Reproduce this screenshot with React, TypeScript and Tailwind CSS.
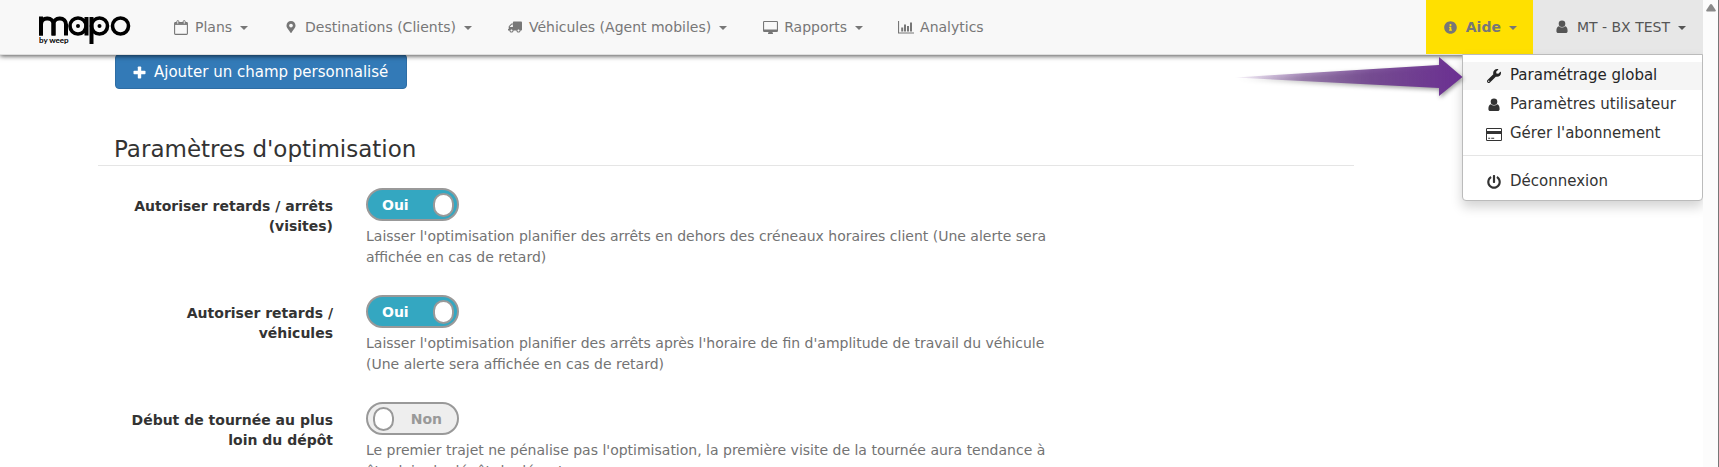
import React, { useState } from 'react';
import { FaInfoCircle, FaMapMarkerAlt, FaPowerOff, FaTruck, FaWrench } from 'react-icons/fa';

const settings = [
  {
    id: 'late-stops',
    label: 'Autoriser retards / arrêts (visites)',
    help: "Laisser l'optimisation planifier des arrêts en dehors des créneaux horaires client (Une alerte sera affichée en cas de retard)",
    value: true
  },
  {
    id: 'late-vehicles',
    label: 'Autoriser retards / véhicules',
    help: "Laisser l'optimisation planifier des arrêts après l'horaire de fin d'amplitude de travail du véhicule (Une alerte sera affichée en cas de retard)",
    value: true
  },
  {
    id: 'far-start',
    label: 'Début de tournée au plus loin du dépôt',
    help: "Le premier trajet ne pénalise pas l'optimisation, la première visite de la tournée aura tendance à être loin du dépôt de départ.",
    value: false
  }
];

function CalendarIcon() {
  return (
    <svg width="14" height="15" viewBox="0 0 14 15" fill="none" stroke="currentColor">
      <rect x="0.6" y="2.6" width="12.8" height="11.8" rx="0.8" strokeWidth="1.1" />
      <path d="M1 4h12" strokeWidth="1.8" />
      <rect x="2.8" y="0.6" width="2" height="3.6" rx="0.9" fill="#f8f8f8" />
      <rect x="9.2" y="0.6" width="2" height="3.6" rx="0.9" fill="#f8f8f8" />
    </svg>
  );
}

function DesktopIcon() {
  return (
    <svg width="15" height="13" viewBox="0 0 15 13" fill="currentColor">
      <path fillRule="evenodd" d="M1.2 0h12.6A1.2 1.2 0 0 1 15 1.2v8.6a1.2 1.2 0 0 1-1.2 1.2H9.4l.6 1.5v.5H5v-.5L5.6 11H1.2A1.2 1.2 0 0 1 0 9.8V1.2A1.2 1.2 0 0 1 1.2 0zM1.1 1.1v7.4h12.8V1.1z" />
    </svg>
  );
}

function ChartIcon() {
  return (
    <svg width="16" height="13" viewBox="0 0 16 13" fill="currentColor">
      <path d="M0 0h1.1v11.5H16v1.1H0zM3.2 6.500h2v4h-2zM6 3.5h2v7H6zM9 5h2v5.5H9zM12 1.5h2v9h-2z" />
    </svg>
  );
}

function UserIcon() {
  return (
    <svg width="12" height="14" viewBox="0 0 12 14" fill="currentColor">
      <circle cx="6" cy="3.7" r="3.3" />
      <path d="M2.9 6.3C1.2 6.5.4 8.4.4 10.9c0 1.3.8 2.2 1.9 2.2h7.4c1.1 0 1.9-.9 1.9-2.2 0-2.5-.8-4.4-2.5-4.6a4.3 4.3 0 0 1-6.200 0z" />
    </svg>
  );
}

function CardIcon() {
  return (
    <svg width="16" height="13" viewBox="0 0 16 13" fill="currentColor">
      <path fillRule="evenodd" d="M1.3 0h13.4A1.3 1.3 0 0 1 16 1.3v10.4a1.3 1.3 0 0 1-1.3 1.3H1.3A1.3 1.3 0 0 1 0 11.7V1.3A1.3 1.3 0 0 1 1.3 0zM1 1v2h14V1zM1 6v6h14V6z" />
      <path d="M2.2 9.8h2v1h-2zM5.2 9.8h3v1h-3z" />
    </svg>
  );
}

function PlusIcon() {
  return (
    <svg width="13" height="13" viewBox="0 0 13 13" fill="currentColor">
      <rect x="0.5" y="4.8" width="12" height="3.4" rx="0.8" />
      <rect x="4.8" y="0.5" width="3.4" height="12" rx="0.8" />
    </svg>
  );
}

function Caret() {
  return (
    <svg width="8" height="4" viewBox="0 0 8 4" fill="currentColor" className="ml-2 mt-0.5">
      <path d="M0 0h8L4 4z" />
    </svg>
  );
}

function Logo() {
  return (
    <svg width="92" height="30" viewBox="0 0 92 30" role="img" aria-label="mapo by weep">
      <svg width="30" height="19.5">
        <rect x="0" y="0.5" width="4" height="20" />
        <g fill="none" stroke="#000" strokeWidth="4">
          <rect x="2" y="2.5" width="12.5" height="30" rx="6" />
          <rect x="14.5" y="2.5" width="12.5" height="30" rx="6" />
        </g>
      </svg>
      <g fill="none" stroke="#000" strokeWidth="3.6">
        <circle cx="39" cy="10" r="8" />
        <circle cx="60.5" cy="10" r="8" />
        <circle cx="81.5" cy="10" r="8" />
      </g>
      <circle cx="39" cy="10" r="2" />
      <circle cx="60.5" cy="10" r="2" />
      <rect x="45.5" y="1" width="4" height="18.5" />
      <rect x="50.5" y="1" width="4" height="27" />
      <text x="0" y="27" fontFamily="Lato" fontWeight="700" fontSize="8">by weep</text>
    </svg>
  );
}

const navItems = [
  { label: 'Plans', icon: <CalendarIcon />, menu: true },
  { label: 'Destinations (Clients)', icon: <FaMapMarkerAlt size={12} />, menu: true },
  { label: 'Véhicules (Agent mobiles)', icon: <FaTruck size={14} className="-scale-x-100" />, menu: true },
  { label: 'Rapports', icon: <DesktopIcon />, menu: true },
  { label: 'Analytics', icon: <ChartIcon />, menu: false }
];

function Toggle({ id, checked, onChange }: { id: string; checked: boolean; onChange: () => void }) {
  return (
    <label
      htmlFor={id}
      className={`flex h-[33px] w-[93px] cursor-pointer items-center justify-between rounded-full border-2 border-[#999] text-sm font-bold ${
        checked ? 'bg-[#34a7c1] pl-3.5 pr-[3px] text-white' : 'flex-row-reverse bg-[#eee] pl-[5px] pr-[15px] text-[#999]'
      }`}
    >
      <input id={id} type="checkbox" role="switch" checked={checked} onChange={onChange} className="sr-only" />
      <span>{checked ? 'Oui' : 'Non'}</span>
      <span className="h-6 w-[21px] rounded-full border-2 border-[#999] bg-white" />
    </label>
  );
}

function MenuItem({ icon, label, active }: { icon: React.ReactNode; label: string; active?: boolean }) {
  return (
    <li>
      <a href="#" className={`flex h-7 items-center gap-1.5 px-[21px] ${active ? 'bg-[#f5f5f5] text-[#262626]' : ''}`}>
        <span className="flex w-5 justify-center">{icon}</span>
        {label}
      </a>
    </li>
  );
}

export default function App() {
  const [values, setValues] = useState(settings.map(s => s.value));

  const toggle = (index: number) => {
    setValues(values.map((v, i) => (i === index ? !v : v)));
  };

  return (
    <div className="flex h-screen overflow-hidden bg-white font-['DejaVu_Sans',sans-serif] text-sm text-[#333]">
      <div className="min-w-0 flex-1 overflow-hidden">
        <header className="relative z-10 flex h-[55px] border-b border-[#e0e0e0] bg-[#f8f8f8] text-[#777] shadow-[0_1px_5px_rgba(0,0,0,0.7)]">
          <a href="#" className="ml-[39px] mr-6 flex items-center pt-2">
            <Logo />
          </a>
          <nav className="flex whitespace-nowrap">
            {navItems.map(item => (
              <a key={item.label} href="#" className="flex items-center px-[17px]">
                <span className="mr-[5px] flex w-[18px] justify-center">{item.icon}</span>
                {item.label}
                {item.menu && <Caret />}
              </a>
            ))}
          </nav>
          <div className="ml-auto flex whitespace-nowrap">
            <button type="button" className="flex items-center bg-[#ffe000] px-4 font-bold">
              <span className="mr-1.5 flex w-[18px] justify-center"><FaInfoCircle size={13} /></span>
              Aide
              <Caret />
            </button>
            <div className="relative flex">
              <button type="button" className="flex items-center bg-[#e7e7e7] pl-5 pr-[17px] text-[#555]">
                <span className="mr-1.5 flex w-[18px] justify-center"><UserIcon /></span>
                MT - BX TEST
                <Caret />
              </button>
              <div className="absolute right-0 top-full flex items-start">
                <svg width="230" height="48" viewBox="0 0 230 48" className="-mr-px mt-px shrink-0 drop-shadow-[1px_2px_2px_rgba(0,0,0,0.4)]">
                  <defs>
                    <linearGradient id="arrow-fade" x1="0" x2="1" y1="0" y2="0">
                      <stop offset="0" stopColor="#6b2f92" stopOpacity="0.05" />
                      <stop offset="0.3" stopColor="#6b3a8c" stopOpacity="0.55" />
                      <stop offset="0.6" stopColor="#6b3a8c" stopOpacity="0.85" />
                      <stop offset="1" stopColor="#6b2f92" />
                    </linearGradient>
                  </defs>
                  <path d="M2 22.500L206 10V2l23.500 20L206 41v-8z" fill="url(#arrow-fade)" />
                </svg>
                <ul className="flex w-[241px] shrink-0 flex-col gap-px rounded-b border border-[#bbb] bg-white pb-1 pt-[7px] text-[15px] text-[#333] shadow-[0_6px_12px_rgba(0,0,0,0.175)]">
                  <MenuItem icon={<FaWrench size={14} />} label="Paramétrage global" active />
                  <MenuItem icon={<UserIcon />} label="Paramètres utilisateur" />
                  <MenuItem icon={<CardIcon />} label="Gérer l'abonnement" />
                  <li role="separator" className="mb-[11px] mt-1.5 h-px bg-[#e5e5e5]" />
                  <MenuItem icon={<FaPowerOff size={14} />} label="Déconnexion" />
                </ul>
              </div>
            </div>
          </div>
        </header>

        <main className="ml-[98px] max-w-[1256px]">
          <button type="button" className="-mt-px ml-[17px] flex h-[35px] items-center gap-2 rounded border border-[#2e6da4] bg-[#337ab7] pl-[17px] pr-[18px] pt-0.5 text-[15px] text-white">
            <PlusIcon />
            Ajouter un champ personnalisé
          </button>

          <h2 className="mt-11 border-b border-[#e5e5e5] pl-4 text-[23px] leading-8">
            Paramètres d'optimisation
          </h2>

          <form className="mt-[22px]">
            {settings.map((s, i) => (
              <div key={s.id} className="mb-[27px] flex gap-[33px]">
                <label htmlFor={s.id} className="w-[235px] shrink-0 pl-4 pt-2 text-right font-bold leading-5">
                  {s.label}
                </label>
                <div className="max-w-[710px]">
                  <Toggle id={s.id} checked={values[i]} onChange={() => toggle(i)} />
                  <p className="mt-[5px] leading-[21px] text-[#737373]">{s.help}</p>
                </div>
              </div>
            ))}
          </form>
        </main>
      </div>

      <div aria-hidden="true" className="flex w-4 justify-center border-r border-[#777] bg-[#fcfcfc] pt-1">
        <svg width="10" height="8" viewBox="0 0 10 8" fill="#8a8a8a">
          <path d="M4 .6a1.3 1.3 0 0 1 2 0L9.6 6a1 1 0 0 1-.8 1.5H1.2A1 1 0 0 1 .4 6z" />
        </svg>
      </div>
    </div>
  );
}
